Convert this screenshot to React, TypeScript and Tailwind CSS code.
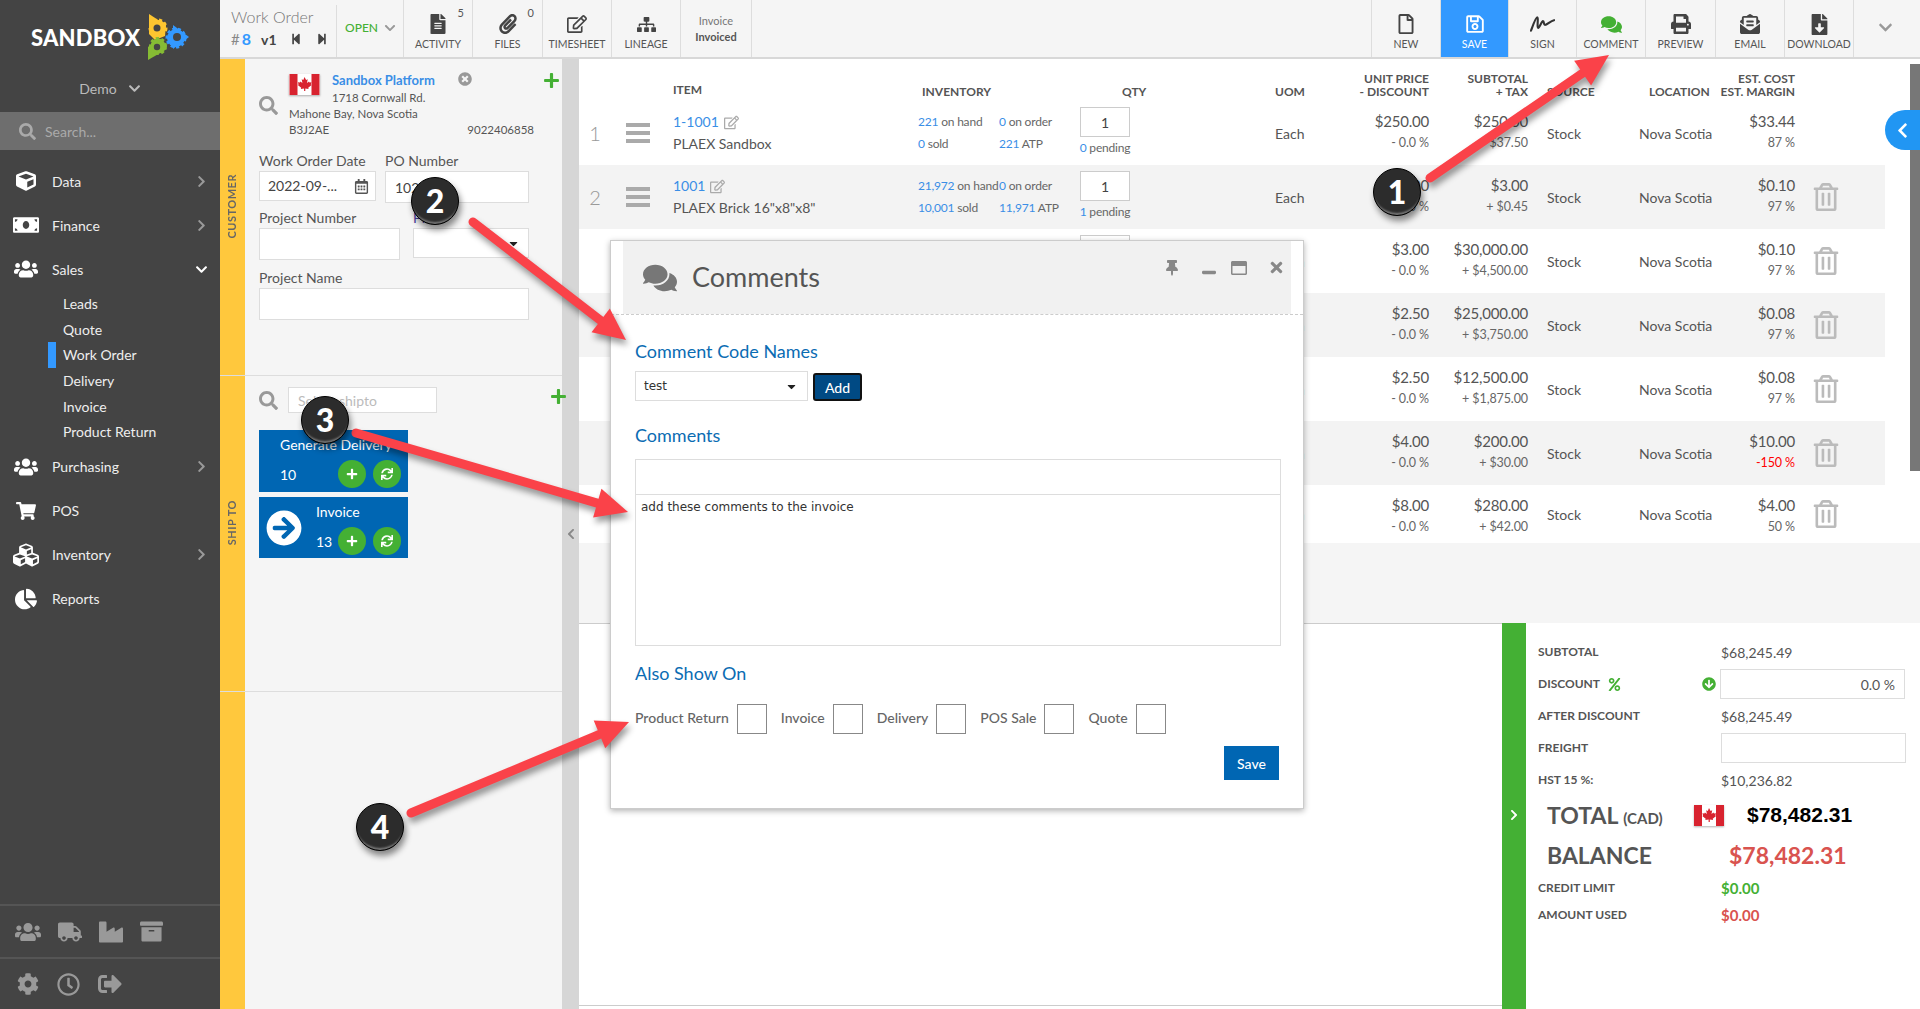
import React from 'react';
import {
  FaArchive, FaArrowCircleDown, FaArrowCircleRight, FaCaretDown, FaChartPie, FaChevronDown, FaChevronLeft,
  FaChevronRight, FaCog, FaComments, FaCube, FaCubes, FaEnvelopeOpenText, FaFileAlt, FaFileDownload, FaIndustry,
  FaMoneyBill, FaPaperclip, FaPercent, FaPlus, FaPrint, FaRegCalendarAlt, FaRegClock, FaRegEdit, FaRegFile,
  FaRegSave, FaRegTrashAlt, FaRegWindowMaximize, FaSearch, FaShoppingCart, FaSignOutAlt, FaSitemap, FaStepBackward,
  FaStepForward, FaSync, FaThumbtack, FaTimes, FaTimesCircle, FaTruck, FaUsers, FaWindowMinimize,
} from 'react-icons/fa';

const rowGrid = 'grid grid-cols-[32px_62px_245px_81px_81px_50px_205px_94px_99px_111px_81px_75px_90px]';

type Line = {
  code?: string;
  name?: string;
  inv?: [string, string, string, string, string, string, string, string];
  pending?: string;
  price: string;
  disc: string;
  sub: string;
  tax: string;
  cost: string;
  margin: string;
  bad?: boolean;
};

const lines: Line[] = [
  {
    code: '1-1001', name: 'PLAEX Sandbox',
    inv: ['221', 'on hand', '0', 'on order', '0', 'sold', '221', 'ATP'],
    pending: '0',
    price: '$250.00', disc: '- 0.0 %', sub: '$250.00', tax: '+ $37.50', cost: '$33.44', margin: '87 %',
  },
  {
    code: '1001', name: 'PLAEX Brick 16"x8"x8"',
    inv: ['21,972', 'on hand', '0', 'on order', '10,001', 'sold', '11,971', 'ATP'],
    pending: '1',
    price: '$3.00', disc: '- 0.0 %', sub: '$3.00', tax: '+ $0.45', cost: '$0.10', margin: '97 %',
  },
  { price: '$3.00', disc: '- 0.0 %', sub: '$30,000.00', tax: '+ $4,500.00', cost: '$0.10', margin: '97 %' },
  { price: '$2.50', disc: '- 0.0 %', sub: '$25,000.00', tax: '+ $3,750.00', cost: '$0.08', margin: '97 %' },
  { price: '$2.50', disc: '- 0.0 %', sub: '$12,500.00', tax: '+ $1,875.00', cost: '$0.08', margin: '97 %' },
  { price: '$4.00', disc: '- 0.0 %', sub: '$200.00', tax: '+ $30.00', cost: '$10.00', margin: '-150 %', bad: true },
  { price: '$8.00', disc: '- 0.0 %', sub: '$280.00', tax: '+ $42.00', cost: '$4.00', margin: '50 %' },
];

function Flag({ className }: { className: string }) {
  return (
    <svg viewBox="0 0 30 21" className={className}>
      <rect width="30" height="21" fill="#fff" />
      <rect width="8" height="21" fill="#d8232f" />
      <rect x="22" width="8" height="21" fill="#d8232f" />
      <path d="M15 3l1.6 3 1.6-.8-.7 3.8 2-1.6.5 1.2 2-.3-.7 2.3.8.5-3.4 2.6.4 1.3-3.3-.4V17h-1.2v-2.4l-3.3.4.4-1.3-3.4-2.6.8-.5-.7-2.3 2 .3.5-1.2 2 1.6-.7-3.8 1.6.8z" fill="#d8232f" />
    </svg>
  );
}

function Logo() {
  return (
    <svg viewBox="0 0 60 64" className="w-[60px] h-[64px] -ml-[10px] -my-[8px] shrink-0">
      <path d="M10 9l17 11-1 11-10 4-6-6z" fill="#fdc530" />
      <circle cx="19" cy="23" r="8" fill="#fdc530" stroke="#fdc530" strokeWidth="3" strokeDasharray="3 2.5" />
      <circle cx="18" cy="23" r="3.5" fill="#444" />
      <path d="M34 20l16 12-16 12z" fill="#3399ff" />
      <circle cx="37" cy="33" r="9" fill="#3399ff" stroke="#3399ff" strokeWidth="3" strokeDasharray="3 2.5" />
      <circle cx="38" cy="32" r="4" fill="#444" />
      <path d="M9 55V42l10-8 9 10z" fill="#86bc34" />
      <circle cx="19" cy="41" r="7.5" fill="#86bc34" stroke="#86bc34" strokeWidth="3" strokeDasharray="3 2.5" />
      <circle cx="18" cy="42" r="3.2" fill="#444" />
    </svg>
  );
}

function NavItem({ icon, label, open, arrow }: { icon: React.ReactNode; label: string; open?: boolean; arrow?: boolean }) {
  return (
    <div className="h-[44px] flex items-center text-[14px] text-[#eee]">
      <div className="w-[52px] flex justify-center pr-[1px] text-white">{icon}</div>
      <span className="flex-1">{label}</span>
      {arrow && (
        <div className="w-[40px] flex justify-center pl-[2px]">
          {open ? <FaChevronDown size={13} className="text-white" /> : <FaChevronRight size={13} className="text-[#999]" />}
        </div>
      )}
    </div>
  );
}

function SubItem({ label, active }: { label: string; active?: boolean }) {
  return (
    <div className="h-[25.6px] flex items-center text-[14px] text-[#eee]">
      <div className={`w-[8px] h-[26px] ml-[48px] mr-[7px] ${active ? 'bg-[#3399ff]' : ''}`} />
      {label}
    </div>
  );
}

function Sidebar() {
  return (
    <aside className="w-[220px] shrink-0 bg-[#444] flex flex-col">
      <div className="h-[112px] pt-[13px]">
        <div className="h-[48px] flex items-center pl-[31px]">
          <span className="text-[22px] font-black text-white tracking-[0.2px] w-[118px]">SANDBOX</span>
          <Logo />
        </div>
        <div className="mt-[15px] h-[24px] flex items-center justify-center gap-[11px] text-[14px] text-[#bbb]">
          Demo <FaChevronDown size={13} />
        </div>
      </div>
      <div className="h-[38px] bg-[#6e6e6e] flex items-center pl-[19px] gap-[9px] text-[14px] text-[#aaa]">
        <FaSearch size={17} className="text-[#aaa]" /> Search...
      </div>
      <nav className="flex-1 pt-[9px]">
        <NavItem icon={<FaCube size={20} />} label="Data" arrow />
        <NavItem icon={<FaMoneyBill size={26} />} label="Finance" arrow />
        <NavItem icon={<FaUsers size={24} />} label="Sales" arrow open />
        <SubItem label="Leads" />
        <SubItem label="Quote" />
        <SubItem label="Work Order" active />
        <SubItem label="Delivery" />
        <SubItem label="Invoice" />
        <SubItem label="Product Return" />
        <NavItem icon={<FaUsers size={24} />} label="Purchasing" arrow />
        <NavItem icon={<FaShoppingCart size={20} />} label="POS" />
        <NavItem icon={<FaCubes size={26} />} label="Inventory" arrow />
        <NavItem icon={<FaChartPie size={22} />} label="Reports" />
      </nav>
      <div className="h-[53px] border-t-2 border-[#555] flex items-center pl-[15px] gap-[17px] text-[#999]">
        <FaUsers size={26} />
        <FaTruck size={24} />
        <FaIndustry size={24} />
        <FaArchive size={23} />
      </div>
      <div className="h-[52px] border-t-2 border-[#555] flex items-center pl-[17px] gap-[18px] text-[#999]">
        <FaCog size={22} />
        <FaRegClock size={23} />
        <FaSignOutAlt size={24} />
      </div>
    </aside>
  );
}

function ToolButton({ icon, label, count, active, w = 'w-[69px]' }: { icon: React.ReactNode; label: string; count?: string; active?: boolean; w?: string }) {
  return (
    <div className={`${w} h-full relative flex flex-col items-center pt-[14px] border-r border-[#ddd] ${active ? 'bg-[#3399ff] text-white' : 'text-[#444]'}`}>
      <div className="h-[20px] flex items-center">{icon}</div>
      <span className={`mt-[3px] text-[10.5px] leading-[14px] whitespace-nowrap ${active ? 'text-white' : 'text-[#555]'}`}>{label}</span>
      {count && <span className="absolute top-[5px] right-[8px] text-[11px] text-[#555]">{count}</span>}
    </div>
  );
}

function Toolbar() {
  return (
    <header className="h-[59px] shrink-0 bg-[#f5f5f5] border-b-2 border-[#d8d8d8] flex">
      <div className="w-[117px] pl-[11px] pt-[6px] mt-0 relative">
        <div className="text-[16px] leading-[22px] font-light text-[#777]">Work Order</div>
        <div className="flex items-center h-[20px] mt-[1px]">
          <span className="text-[15px] text-[#888] mr-[2px]">#</span>
          <span className="text-[16px] font-bold text-[#3399ff] mr-[10px]">8</span>
          <span className="text-[14px] font-bold text-[#444] mr-[13px]">v1</span>
          <FaStepBackward size={12} className="text-[#444] mr-[14px]" />
          <FaStepForward size={12} className="text-[#444]" />
        </div>
        <div className="absolute right-0 top-[5px] bottom-0 w-px bg-[#ddd]" />
      </div>
      <div className="w-[67px] border-r border-[#ddd] flex items-center pl-[8px] gap-[6px] pb-[2px]">
        <span className="text-[12px] font-medium text-[#44b034]">OPEN</span>
        <FaChevronDown size={12} className="text-[#999]" />
      </div>
      <ToolButton icon={<FaFileAlt size={20} />} label="ACTIVITY" count="5" />
      <ToolButton icon={<FaPaperclip size={20} />} label="FILES" count="0" w="w-[70px]" />
      <ToolButton icon={<FaRegEdit size={20} />} label="TIMESHEET" />
      <ToolButton icon={<FaSitemap size={19} />} label="LINEAGE" />
      <div className="w-[71px] border-r border-[#ddd] flex flex-col items-center pt-[13px] text-[11px] leading-[16px]">
        <span className="text-[#777]">Invoice</span>
        <span className="font-bold text-[#555]">Invoiced</span>
      </div>
      <div className="flex-1 border-r border-[#ddd]" />
      <ToolButton icon={<FaRegFile size={20} />} label="NEW" />
      <ToolButton icon={<FaRegSave size={20} />} label="SAVE" active w="w-[68px]" />
      <ToolButton
        w="w-[68px]"
        label="SIGN"
        icon={
          <svg viewBox="0 0 26 18" className="w-[25px] h-[18px]" fill="none" stroke="#333" strokeWidth="2.2" strokeLinecap="round">
            <path d="M1 16C4 8 6 2 7.5 2 9 2 7 13 8.5 13 10 13 12 6 13.5 6 15 6 14 10 15.5 10 18 10 21 6 25 5" />
          </svg>
        }
      />
      <ToolButton icon={<FaComments size={21} className="text-[#44b034]" />} label="COMMENT" />
      <ToolButton icon={<FaPrint size={20} />} label="PREVIEW" w="w-[70px]" />
      <ToolButton icon={<FaEnvelopeOpenText size={20} />} label="EMAIL" />
      <ToolButton icon={<FaFileDownload size={21} />} label="DOWNLOAD" />
      <div className="w-[66px] flex items-center justify-center pb-[2px] pr-[3px]">
        <FaChevronDown size={15} className="text-[#999]" />
      </div>
    </header>
  );
}

const inputClass = 'bg-white border border-[#ddd] outline-none text-[14px] text-[#444] px-[9px]';

function SideTab({ label, className }: { label: string; className: string }) {
  return (
    <div className={`w-[25px] shrink-0 bg-[#ffc83d] flex items-center justify-center pb-[22px] border-b border-[#ddd] ${className}`}>
      <span className="[writing-mode:vertical-rl] rotate-180 text-[11px] font-bold tracking-[0.5px] text-[#666]">{label}</span>
    </div>
  );
}

function RoundBtn({ children }: { children: React.ReactNode }) {
  return <div className="w-[28px] h-[28px] rounded-full bg-[#44b034] flex items-center justify-center text-white">{children}</div>;
}

function CustomerPanel() {
  return (
    <section className="h-[317px] flex">
      <SideTab label="CUSTOMER" className="" />
      <div className="flex-1 border-b border-[#ddd] pl-[14px] pr-[33px] pt-[12px] text-[#555] relative">
        <div className="flex">
          <div className="w-[30px] pt-[25px]">
            <FaSearch size={19} className="text-[#999]" />
          </div>
          <div className="flex-1 text-[11.5px] leading-[16px]">
            <div className="flex">
              <div className="w-[43px] pt-[3px]">
                <Flag className="w-[31px] h-[21px] shadow-[0_1px_2px_rgba(0,0,0,0.3)]" />
              </div>
              <div>
                <div className="h-[18px] leading-[18px] text-[13px] font-bold text-[#3a8ee6]">Sandbox Platform</div>
                <div className="h-[17px] leading-[17px]">1718 Cornwall Rd.</div>
              </div>
            </div>
            <div>Mahone Bay, Nova Scotia</div>
            <div className="flex justify-between pr-[-5px]">
              <span>B3J2AE</span>
              <span className="mr-[-5px]">9022406858</span>
            </div>
          </div>
        </div>
        <FaTimesCircle size={14} className="absolute left-[213px] top-[13px] text-[#999]" />
        <FaPlus size={17} className="absolute left-[298px] top-[13px] text-[#44b034]" />
        <div className="mt-[14px] flex gap-[9px] text-[14px] leading-[18px]">
          <div className="w-[117px]">
            <div className="whitespace-nowrap">Work Order Date</div>
            <div className="mt-[1px] h-[30px] bg-white border border-[#ddd] flex items-center justify-between pl-[8px] pr-[6px] text-[#444]">
              2022-09-... <FaRegCalendarAlt size={15} className="text-[#555]" />
            </div>
          </div>
          <div className="flex-1">
            <div>PO Number</div>
            <input readOnly defaultValue="102" className={`${inputClass} mt-[1px] w-full h-[32px]`} />
          </div>
        </div>
        <div className="mt-[6px] flex justify-between text-[14px] leading-[18px]">
          <div className="w-[141px]">
            <div>Project Number</div>
            <input readOnly className={`${inputClass} mt-[1px] w-full h-[32px]`} />
          </div>
          <div className="w-[116px]">
            <div className="text-[#4b3fa0]">PM</div>
            <div className="mt-[1px] h-[30px] bg-white border border-[#ddd] flex items-center justify-end pr-[8px]">
              <FaCaretDown size={13} className="text-[#222]" />
            </div>
          </div>
        </div>
        <div className="mt-[9px] text-[14px] leading-[18px]">
          <div>Project Name</div>
          <input readOnly className={`${inputClass} mt-[1px] w-full h-[32px]`} />
        </div>
      </div>
    </section>
  );
}

function ShipToPanel() {
  return (
    <section className="h-[316px] flex">
      <SideTab label="SHIP TO" className="" />
      <div className="flex-1 border-b border-[#ddd] pl-[14px] pt-[11px] relative">
        <div className="flex items-center">
          <FaSearch size={19} className="text-[#999] mr-[10px]" />
          <input readOnly placeholder="Select shipto" className={`${inputClass} w-[149px] h-[26px] text-[12px] placeholder:text-[#bbb]`} />
        </div>
        <FaPlus size={17} className="absolute left-[305px] top-[12px] text-[#44b034]" />
        <div className="mt-[17px] w-[149px] h-[62px] bg-[#0066b3] text-white text-[14px] pl-[21px] pr-[7px] pt-[6px]">
          <div className="h-[18px] leading-[18px] whitespace-nowrap">Generate Delivery</div>
          <div className="mt-[6px] flex items-center">
            <span className="flex-1">10</span>
            <div className="flex gap-[7px]">
              <RoundBtn><FaPlus size={12} /></RoundBtn>
              <RoundBtn><FaSync size={12} /></RoundBtn>
            </div>
          </div>
        </div>
        <div className="mt-[5px] w-[149px] h-[61px] bg-[#0066b3] text-white text-[14px] pl-[7px] pr-[7px] flex">
          <div className="w-[36px] h-full flex items-center">
            <FaArrowCircleRight size={36} className="text-white" />
          </div>
          <div className="flex-1 ml-[14px] pt-[6px]">
            <div className="h-[18px] leading-[18px]">Invoice</div>
            <div className="mt-[6px] flex items-center">
              <span className="flex-1">13</span>
              <div className="flex gap-[7px]">
                <RoundBtn><FaPlus size={12} /></RoundBtn>
                <RoundBtn><FaSync size={12} /></RoundBtn>
              </div>
            </div>
          </div>
        </div>
      </div>
    </section>
  );
}

function LeftPanel() {
  return (
    <div className="w-[342px] shrink-0 bg-[#f5f5f5] flex flex-col">
      <CustomerPanel />
      <ShipToPanel />
      <div className="flex-1 flex">
        <div className="w-[25px] bg-[#ffc83d]" />
      </div>
    </div>
  );
}

function TwoLine({ top, bottom, bottomClass = 'text-[#666]' }: { top: string; bottom: string; bottomClass?: string }) {
  return (
    <div className="flex flex-col items-end pt-[9px]">
      <span className="text-[15px] leading-[22px] text-[#555] tracking-[-0.2px] whitespace-nowrap">{top}</span>
      <span className={`text-[12.5px] leading-[22px] tracking-[-0.1px] whitespace-nowrap ${bottomClass}`}>{bottom}</span>
    </div>
  );
}

function Inv({ n, label }: { n: string; label: string }) {
  return (
    <span className="whitespace-nowrap">
      <span className="text-[#3a8ee6]">{n}</span> {label}
    </span>
  );
}

function TableRow({ line, index }: { line: Line; index: number }) {
  const center = 'flex items-center text-[14px] text-[#555]';
  return (
    <div className={`${rowGrid} w-[1306px] ${index === 6 ? 'h-[58px]' : 'h-[64px]'} ${index % 2 === 1 ? 'bg-[#f3f3f3]' : 'bg-white'}`}>
      <div className="flex items-center justify-center text-[20px] font-light text-[#999]">{index < 2 ? index + 1 : ''}</div>
      <div className="pl-[15px] flex flex-col justify-center gap-[4px]">
        {index < 2 && [0, 1, 2].map((b) => <div key={b} className="w-[24px] h-[4px] bg-[#aaa]" />)}
      </div>
      <div className="pt-[10px] text-[14px] leading-[22px] text-[#555]">
        {line.code && (
          <div className="flex items-center gap-[5px] text-[#3a8ee6]">
            {line.code} <FaRegEdit size={15} className="text-[#aaa]" />
          </div>
        )}
        {line.name && <div>{line.name}</div>}
      </div>
      <div className="pt-[10px] text-[12px] leading-[22px] text-[#666] tracking-[-0.2px]">
        {line.inv && (
          <>
            <div><Inv n={line.inv[0]} label={line.inv[1]} /></div>
            <div><Inv n={line.inv[4]} label={line.inv[5]} /></div>
          </>
        )}
      </div>
      <div className="pt-[10px] text-[12px] leading-[22px] text-[#666] tracking-[-0.2px]">
        {line.inv && (
          <>
            <div><Inv n={line.inv[2]} label={line.inv[3]} /></div>
            <div><Inv n={line.inv[6]} label={line.inv[7]} /></div>
          </>
        )}
      </div>
      <div className="pt-[6px] flex flex-col items-center">
        <div className="w-[50px] h-[30px] bg-white border border-[#ccc] flex items-center justify-center text-[14px] text-[#444]">
          {index < 2 ? 1 : ''}
        </div>
        {line.pending && (
          <span className="mt-[3px] text-[12px] leading-[16px] text-[#666] tracking-[-0.2px] whitespace-nowrap">
            <span className="text-[#3a8ee6]">{line.pending}</span> pending
          </span>
        )}
      </div>
      <div className={`${center} pl-[145px]`}>Each</div>
      <TwoLine top={line.price} bottom={line.disc} />
      <TwoLine top={line.sub} bottom={line.tax} />
      <div className={`${center} pl-[19px]`}>Stock</div>
      <div className={center}>Nova Scotia</div>
      <TwoLine top={line.cost} bottom={line.margin} bottomClass={line.bad ? 'text-[#f00]' : 'text-[#666]'} />
      <div className="pl-[17px] flex items-center text-[#bbb]">
        {index > 0 && <FaRegTrashAlt size={28} />}
      </div>
    </div>
  );
}

function TableHead() {
  const th = 'text-[12px] leading-[13px] font-bold text-[#555] whitespace-nowrap';
  return (
    <div className={`${rowGrid} w-[1306px] h-[42px] bg-white`}>
      <div />
      <div />
      <div className={`${th} pt-[24px]`}>ITEM</div>
      <div className={`${th} pt-[26px] pl-[4px] col-span-2`}>INVENTORY</div>
      <div className={`${th} pt-[26px] pl-[42px]`}>QTY</div>
      <div className={`${th} pt-[26px] pl-[145px]`}>UOM</div>
      <div className={`${th} pt-[13px] text-right`}>UNIT PRICE<br />- DISCOUNT</div>
      <div className={`${th} pt-[13px] text-right`}>SUBTOTAL<br />+ TAX</div>
      <div className={`${th} pt-[26px] pl-[19px]`}>SOURCE</div>
      <div className={`${th} pt-[26px] pl-[10px]`}>LOCATION</div>
      <div className={`${th} pt-[13px] text-right`}>EST. COST<br />EST. MARGIN</div>
      <div />
    </div>
  );
}

function SumRow({ label, children }: { label: React.ReactNode; children: React.ReactNode }) {
  return (
    <div className="h-[32px] flex items-center">
      <div className="w-[183px] flex items-center text-[12px] font-bold text-[#555]">{label}</div>
      <div className="text-[14px] text-[#555]">{children}</div>
    </div>
  );
}

function Summary() {
  return (
    <div className="w-[418px] flex">
      <div className="w-[24px] bg-[#44b034] flex items-center justify-center pb-[2px] text-white">
        <FaChevronRight size={12} />
      </div>
      <div className="flex-1 bg-white pl-[12px] pt-[13px]">
        <SumRow label="SUBTOTAL">$68,245.49</SumRow>
        <div className="h-[32px] flex items-center">
          <div className="w-[182px] flex items-center text-[12px] font-bold text-[#555]">
            <span className="w-[70px]">DISCOUNT</span>
            <FaPercent size={13} className="text-[#44b034]" />
            <FaArrowCircleDown size={14} className="ml-auto mr-[4px] text-[#44b034]" />
          </div>
          <div className="w-[185px] h-[30px] border border-[#ddd] flex items-center justify-end pr-[9px] text-[14px] text-[#555]">0.0 %</div>
        </div>
        <SumRow label="AFTER DISCOUNT">$68,245.49</SumRow>
        <SumRow label="FREIGHT">
          <div className="w-[185px] h-[30px] border border-[#ddd]" />
        </SumRow>
        <SumRow label="HST 15 %:">$10,236.82</SumRow>
        <div className="h-[38px] flex items-center pl-[9px] font-bold text-[#555]">
          <div className="w-[147px] text-[23px] whitespace-nowrap">
            TOTAL <span className="text-[15px]">(CAD)</span>
          </div>
          <Flag className="w-[30px] h-[21px] shadow-[0_1px_2px_rgba(0,0,0,0.3)]" />
          <span className="ml-[23px] font-['Liberation_Sans',sans-serif] text-[21px] text-black">$78,482.31</span>
        </div>
        <div className="h-[42px] flex items-center pl-[9px] font-bold text-[23px] text-[#555]">
          <span className="w-[182px]">BALANCE</span>
          <span className="text-[#d9534f]">$78,482.31</span>
        </div>
        <div className="h-[24px] flex items-center">
          <span className="w-[183px] text-[12px] font-bold text-[#555]">CREDIT LIMIT</span>
          <span className="text-[15px] font-bold text-[#44b034]">$0.00</span>
        </div>
        <div className="mt-[2px] h-[26px] flex items-center">
          <span className="w-[183px] text-[12px] font-bold text-[#555]">AMOUNT USED</span>
          <span className="text-[15px] font-bold text-[#d9534f]">$0.00</span>
        </div>
      </div>
    </div>
  );
}

function MainPanel() {
  return (
    <main className="flex-1 flex flex-col bg-white relative">
      <div className="h-[564px] flex flex-col">
        <TableHead />
        {lines.map((line, i) => (
          <TableRow key={i} line={line} index={i} />
        ))}
        <div className="flex-1 bg-[#f5f5f5]" />
      </div>
      <div className="flex-1 flex">
        <div className="flex-1 flex flex-col">
          <div className="flex-1 border-t border-[#ccc] border-b mb-[3px]" />
        </div>
        <Summary />
      </div>
      <div className="absolute right-0 top-[5px] w-[10px] h-[407px] bg-[#777]" />
      <div className="absolute right-0 top-[51px] w-[35px] h-[40px] rounded-l-[20px] bg-[#2196f3] flex items-center justify-center text-white">
        <FaChevronLeft size={17} />
      </div>
    </main>
  );
}

function Heading({ children }: { children: React.ReactNode }) {
  return <div className="h-[24px] leading-[24px] text-[18px] text-[#0b6cb3]">{children}</div>;
}

function CheckItem({ label }: { label: string }) {
  return (
    <div className="flex items-center gap-[8px] mr-[14px] text-[14px] font-medium text-[#666]">
      <span className="whitespace-nowrap -mt-[4px]">{label}</span>
      <div className="w-[30px] h-[30px] border border-[#888] bg-white" />
    </div>
  );
}

function CommentsModal() {
  return (
    <div className="absolute left-[610px] top-[240px] w-[694px] h-[569px] bg-white border border-[#ccc] shadow-[0_2px_6px_rgba(0,0,0,0.3)]">
      <div className="h-[73px] mx-[12px] bg-[#f1f1f1] flex items-center pl-[20px] relative">
        <FaComments size={34} className="text-[#777] mr-[15px]" />
        <span className="text-[27px] text-[#555]">Comments</span>
        <div className="absolute top-[18px] right-[6px] flex items-center text-[#888]">
          <FaThumbtack size={16} className="mr-[22px]" />
          <FaWindowMinimize size={14} className="mr-[15px]" />
          <FaRegWindowMaximize size={16} className="mr-[21px]" />
          <FaTimes size={17} />
        </div>
      </div>
      <div className="border-t border-dashed border-[#ccc] pl-[24px] pr-[22px] pt-[24px]">
        <Heading>Comment Code Names</Heading>
        <div className="mt-[8px] flex">
          <div className="w-[173px] h-[30px] border border-[#ddd] flex items-center justify-between pl-[8px] pr-[9px] font-['DejaVu_Sans',sans-serif] text-[12px] text-[#333]">
            test <FaCaretDown size={13} className="text-[#222]" />
          </div>
          <button className="ml-[5px] mt-[2px] w-[49px] h-[28px] rounded-[3px] bg-[#004a84] border-2 border-[#111] text-[14px] font-medium text-white">Add</button>
        </div>
        <div className="mt-[22px]"><Heading>Comments</Heading></div>
        <div className="mt-[12px] h-[187px] border border-[#ddd] flex flex-col">
          <div className="h-[35px] border-b border-[#ddd]" />
          <div className="pl-[5px] pt-[3px] font-['DejaVu_Sans',sans-serif] text-[12px] leading-[18px] text-[#333]">add these comments to the invoice</div>
        </div>
        <div className="mt-[15px]"><Heading>Also Show On</Heading></div>
        <div className="mt-[19px] flex">
          <CheckItem label="Product Return" />
          <CheckItem label="Invoice" />
          <CheckItem label="Delivery" />
          <CheckItem label="POS Sale" />
          <CheckItem label="Quote" />
        </div>
        <div className="mt-[12px] flex justify-end pr-[2px]">
          <button className="w-[55px] h-[34px] bg-[#0066b3] text-[14px] font-medium text-white">Save</button>
        </div>
      </div>
    </div>
  );
}

// red call-out arrows, start to tip in page coordinates
const arrows = [
  [1430, 178, 1609, 55],
  [473, 222, 626, 340],
  [356, 433, 628, 512],
  [411, 813, 629, 722],
];

function Arrow({ pts }: { pts: number[] }) {
  const [x1, y1, x2, y2] = pts;
  const len = Math.hypot(x2 - x1, y2 - y1);
  const ux = (x2 - x1) / len;
  const uy = (y2 - y1) / len;
  const bx = x2 - ux * 32;
  const by = y2 - uy * 32;
  const head = `${x2},${y2} ${bx - uy * 15},${by + ux * 15} ${bx + uy * 15},${by - ux * 15}`;
  return (
    <g>
      <line x1={x1} y1={y1} x2={bx} y2={by} stroke="#fa4249" strokeWidth="9" strokeLinecap="round" />
      <polygon points={head} fill="#fa4249" />
    </g>
  );
}

function Badge({ n, x, y }: { n: number; x: string; y: string }) {
  return (
    <div className={`absolute ${x} ${y} w-[48px] h-[48px] rounded-full bg-[#2c2c2c] border border-black flex items-center justify-center text-[32px] font-black text-white shadow-[inset_0_-4px_2px_-2px_#777,2px_5px_6px_rgba(0,0,0,0.45)]`}>
      {n}
    </div>
  );
}

export default function App() {
  return (
    <div className="relative w-full h-screen overflow-hidden flex font-['Lato',sans-serif]">
      <Sidebar />
      <div className="flex-1 flex flex-col min-w-0">
        <Toolbar />
        <div className="flex-1 flex min-h-0">
          <LeftPanel />
          <div className="w-[17px] shrink-0 bg-[#d6d6d6] flex items-center justify-center">
            <FaChevronLeft size={12} className="text-[#888]" />
          </div>
          <MainPanel />
        </div>
      </div>
      <CommentsModal />
      <svg className="absolute inset-0 w-full h-full pointer-events-none drop-shadow-[2px_5px_3px_rgba(0,0,0,0.4)]">
        {arrows.map((a, i) => (
          <Arrow key={i} pts={a} />
        ))}
      </svg>
      <Badge n={1} x="left-[1373px]" y="top-[168px]" />
      <Badge n={2} x="left-[411px]" y="top-[177px]" />
      <Badge n={3} x="left-[301px]" y="top-[396px]" />
      <Badge n={4} x="left-[356px]" y="top-[803px]" />
    </div>
  );
}
